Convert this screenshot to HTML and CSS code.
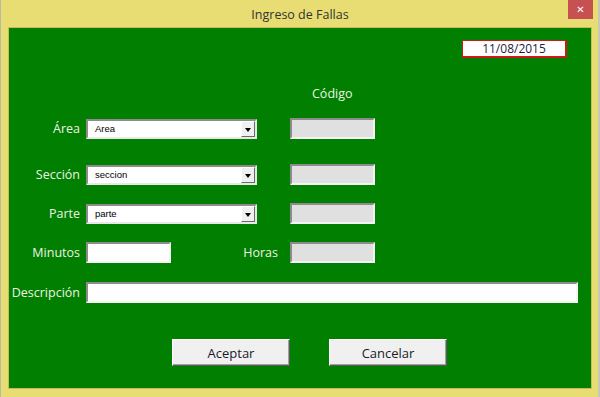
FILE: index.html
```html
<!DOCTYPE html>
<html lang="es">
<head>
    <meta charset="UTF-8">
    <meta name="viewport" content="width=device-width, initial-scale=1.0">
    <title>Ingreso de Fallas</title>
    <link rel="stylesheet" href="styles.css">
</head>
<body>
    <div class="window">
        <div class="titlebar">
            <span class="title">Ingreso de Fallas</span>
            <button class="close">&#x2715;</button>
        </div>
        <div class="form">
            <div class="date-row">
                <div class="date">11/08/2015</div>
            </div>
            <div class="code-header">Código</div>

            <div class="row row-area">
                <label class="label">Área</label>
                <div class="combo"><span>Area</span><i class="arrow"></i></div>
                <input class="code" type="text" readonly>
            </div>
            <div class="row row-seccion">
                <label class="label">Sección</label>
                <div class="combo"><span>seccion</span><i class="arrow"></i></div>
                <input class="code" type="text" readonly>
            </div>
            <div class="row row-parte">
                <label class="label">Parte</label>
                <div class="combo"><span>parte</span><i class="arrow"></i></div>
                <input class="code" type="text" readonly>
            </div>
            <div class="row row-minutos">
                <label class="label">Minutos</label>
                <input class="field minutes" type="text">
                <label class="label hours-label">Horas</label>
                <input class="code" type="text" readonly>
            </div>
            <div class="row row-desc">
                <label class="label">Descripción</label>
                <input class="field desc" type="text">
            </div>

            <div class="actions">
                <button class="btn">Aceptar</button>
                <button class="btn">Cancelar</button>
            </div>
        </div>
    </div>
</body>
</html>
```

FILE: styles.css
```css
body {
    margin: 0;
    font-family: "Open Sans", "Noto Sans", sans-serif;
}
.window {
    width: 600px;
    height: 397px;
    box-sizing: border-box;
    background-color: #e8dd72;
    border-left: 1px solid #b8b8a8;
    border-right: 2px solid #c8c8b8;
    padding: 0 6px 8px 7px;
    display: flex;
    flex-direction: column;
}
.titlebar {
    height: 27px;
    display: flex;
    align-items: flex-start;
    justify-content: center;
    position: relative;
}
.title {
    font-size: 12.5px;
    color: #333;
    margin-top: 6px;
}
.close {
    position: absolute;
    top: 0;
    right: -1px;
    width: 25px;
    height: 19px;
    border: none;
    padding: 0;
    background-color: #c75050;
    color: #fff;
    font-size: 10px;
    font-weight: bold;
    font-family: "DejaVu Sans", sans-serif;
}
.form {
    flex: 1;
    background-color: #007f00;
    border: 1px solid #c9bd5a;
    display: flex;
    flex-direction: column;
    color: #eef3e4;
    font-size: 12.5px;
}
.date-row {
    display: flex;
    justify-content: flex-end;
    padding: 12px 24px 0 0;
}
.date {
    width: 102px;
    height: 15px;
    border: 2px solid #d01818;
    border-width: 1px 2px 2px 1px;
    background: #fff;
    color: #1c1c3c;
    font-size: 12px;
    line-height: 15px;
    text-align: center;
}
.code-header {
    margin: 27px 0 0 303px;
    height: 18px;
    line-height: 18px;
}
.row {
    display: flex;
    align-items: center;
    height: 21px;
}
.row-area { margin-top: 15px; }
.row-seccion { margin-top: 25px; }
.row-parte { margin-top: 18px; }
.row-minutos { margin-top: 18px; }
.row-desc { margin-top: 19px; }
.label {
    width: 71px;
    text-align: right;
    margin-right: 6px;
    flex-shrink: 0;
}
.combo {
    width: 167px;
    height: 16px;
    background: #fff;
    border: 2px solid;
    border-color: #8c8c8c #e8e8e8 #e8e8e8 #8c8c8c;
    position: relative;
    font-family: "Liberation Sans", Arial, sans-serif;
    font-size: 9.5px;
    color: #000;
    line-height: 16px;
    margin-right: 33px;
}
.combo span {
    margin-left: 7px;
}
.arrow {
    position: absolute;
    right: 0;
    top: 0;
    width: 14px;
    height: 16px;
    box-sizing: border-box;
    background: #f0f0f0;
    border: 1px solid;
    border-color: #fff #6a6a6a #6a6a6a #fff;
}
.arrow::after {
    content: "";
    position: absolute;
    left: 3px;
    top: 6px;
    border-left: 3.5px solid transparent;
    border-right: 3.5px solid transparent;
    border-top: 4px solid #000;
}
.code,
.field {
    box-sizing: border-box;
    height: 21px;
    border: 2px solid;
    border-color: #8c8c8c #f4f4f4 #f4f4f4 #8c8c8c;
    padding: 0;
    margin: 0;
}
.code {
    width: 85px;
    background: #e0e0e0;
}
.field {
    background: #fff;
}
.minutes {
    width: 85px;
}
.hours-label {
    width: 107px;
    margin-right: 12px;
}
.desc {
    width: 492px;
}
.actions {
    display: flex;
    margin: 36px 0 0 163px;
    gap: 39px;
}
.btn {
    width: 118px;
    height: 27px;
    box-sizing: border-box;
    background: #f0f0f0;
    border: 1px solid;
    border-color: #fff #5a5a5a #5a5a5a #fff;
    box-shadow: inset -1px -1px 0 #a0a0a0;
    font-family: "Open Sans", "Noto Sans", sans-serif;
    font-size: 13px;
    color: #1a1a2a;
    padding: 0;
}
```
